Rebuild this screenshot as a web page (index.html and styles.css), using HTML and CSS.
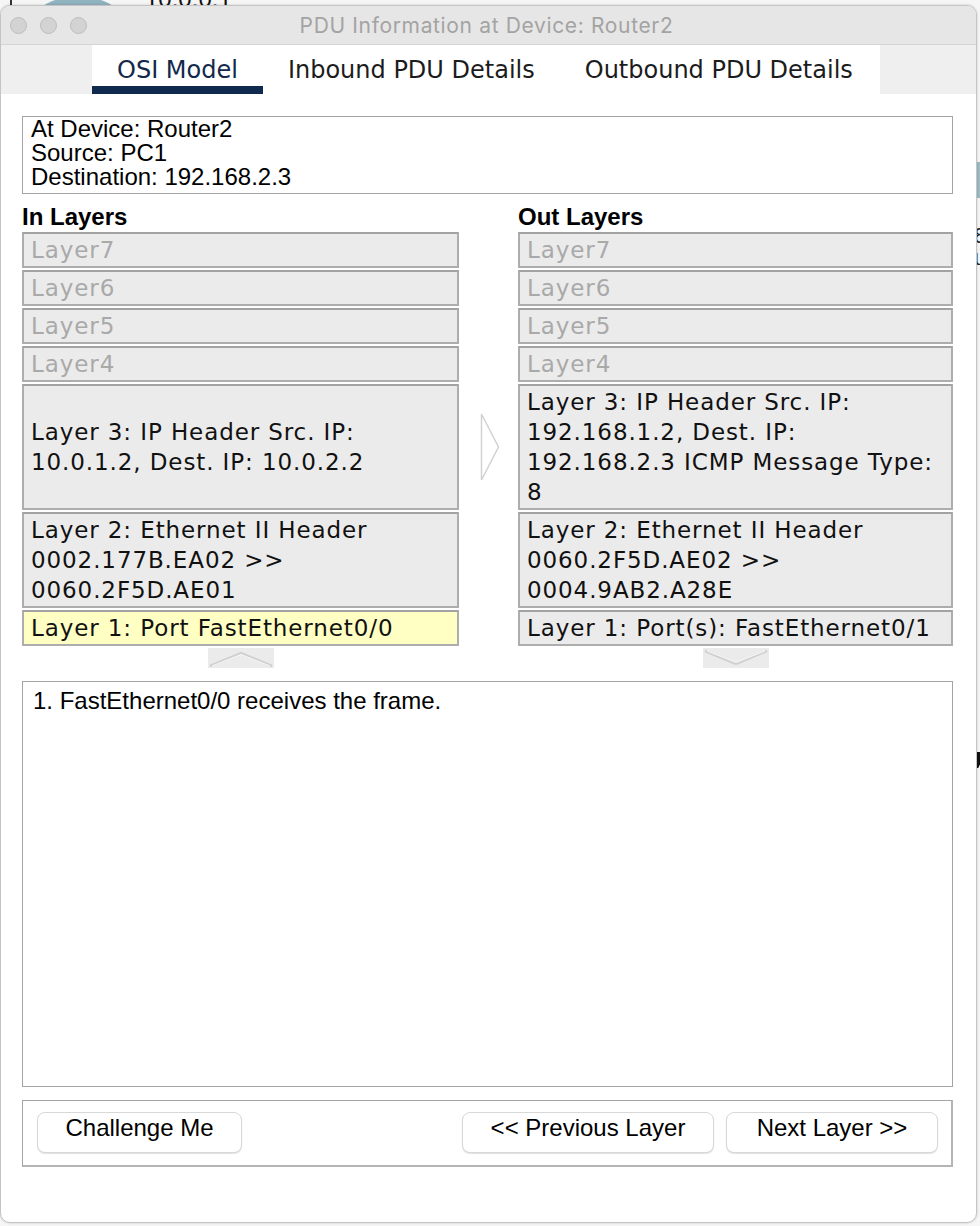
FILE: index.html
```html
<!DOCTYPE html>
<html>
<head>
<meta charset="utf-8">
<title>PDU Information at Device: Router2</title>
<link rel="stylesheet" href="styles.css">
</head>
<body>
<div class="desk">
  <span class="desk-line"></span>
  <span class="desk-router"></span>
  <span class="desk-ip">10.0.0.1</span>
  <span class="desk-switch"></span>
  <span class="desk-t8">8</span>
  <span class="desk-tu">u</span>
  <span class="desk-mark"></span>
</div>
<div class="window">
  <div class="titlebar">
    <div class="lights"><span></span><span></span><span></span></div>
    <div class="title">PDU Information at Device: Router2</div>
    <div></div>
  </div>
  <div class="tabstrip">
    <div class="tabs">
      <div class="tab active">OSI Model</div>
      <div class="tab">Inbound PDU Details</div>
      <div class="tab">Outbound PDU Details</div>
    </div>
  </div>
  <div class="content">
    <div class="info">At Device: Router2<br>Source: PC1<br>Destination: 192.168.2.3</div>
    <div class="layers">
      <div class="heading left">In Layers</div>
      <div class="heading right">Out Layers</div>

      <div class="layer off left">Layer7</div>
      <div class="layer off right">Layer7</div>
      <div class="layer off left">Layer6</div>
      <div class="layer off right">Layer6</div>
      <div class="layer off left">Layer5</div>
      <div class="layer off right">Layer5</div>
      <div class="layer off left">Layer4</div>
      <div class="layer off right">Layer4</div>

      <div class="layer left"><div>Layer 3: IP Header Src. IP:<br>10.0.1.2, Dest. IP: 10.0.2.2</div></div>
      <div class="layer right"><div>Layer 3: IP Header Src. IP:<br>192.168.1.2, Dest. IP:<br>192.168.2.3 ICMP Message Type:<br>8</div></div>

      <div class="layer left"><div>Layer 2: Ethernet II Header<br>0002.177B.EA02 &gt;&gt;<br>0060.2F5D.AE01</div></div>
      <div class="layer right"><div>Layer 2: Ethernet II Header<br>0060.2F5D.AE02 &gt;&gt;<br>0004.9AB2.A28E</div></div>

      <div class="layer hl left">Layer 1: Port FastEthernet0/0</div>
      <div class="layer right">Layer 1: Port(s): FastEthernet0/1</div>

      <div class="arrow-btn left">
        <svg width="66" height="20" viewBox="0 0 66 20"><polyline points="2,18 33,5 64,18" fill="none" stroke="#d0d0d0" stroke-width="2.5"/><polyline points="4,18 33,6.5 62,18" fill="none" stroke="#f9f9f9" stroke-width="1"/></svg>
      </div>
      <div class="arrow-btn right">
        <svg width="66" height="20" viewBox="0 0 66 20"><polyline points="2,3 33,16 64,3" fill="none" stroke="#d0d0d0" stroke-width="2.5"/><polyline points="4,3 33,14.5 62,3" fill="none" stroke="#f9f9f9" stroke-width="1"/></svg>
      </div>

      <div class="mid-arrow">
        <svg width="20" height="68" viewBox="0 0 20 68"><polygon points="1.5,1 18.5,34 1.5,67" fill="#fff" stroke="#d2d2d2" stroke-width="1.5"/></svg>
      </div>
    </div>
    <div class="desc">1. FastEthernet0/0 receives the frame.</div>
    <div class="buttons">
      <div class="btn challenge">Challenge Me</div>
      <div class="btn prev">&lt;&lt; Previous Layer</div>
      <div class="btn next">Next Layer &gt;&gt;</div>
    </div>
  </div>
</div>
</body>
</html>
```
FILE: styles.css
```css
* { box-sizing: border-box; }
html, body { margin: 0; padding: 0; }
body {
  width: 980px;
  height: 1226px;
  overflow: hidden;
  position: relative;
  background: #f6f6f6;
  font-family: "Liberation Sans", Arial, sans-serif;
  color: #000;
}

/* desktop behind the dialog */
.desk-line { position: absolute; left: 10px; top: 0; width: 2px; height: 6px; background: #333; }
.desk-router { position: absolute; left: 40px; top: -3px; width: 76px; height: 30px; border-radius: 50%; background: #8fb3bf; }
.desk-ip { position: absolute; left: 145px; top: -15px; font-size: 24px; color: #111; }
.desk-switch { position: absolute; left: 968px; top: 162px; width: 20px; height: 36px; background: #9dbcc6; }
.desk-t8 { position: absolute; left: 974px; top: 226px; font-size: 22px; line-height: 20px; color: #222; }
.desk-tu { position: absolute; left: 974px; top: 248px; font-size: 22px; line-height: 20px; color: #222; }
.desk-mark { position: absolute; left: 972px; top: 752px; width: 10px; height: 16px; background: #111; transform: skewX(-25deg); }

.window {
  position: relative;
  z-index: 1;
  margin-top: 5px;
  width: 977px;
  height: 1218px;
  background: #fff;
  border: 1px solid #c4c4c4;
  border-radius: 10px;
  overflow: hidden;
  box-shadow: 0 0 3px rgba(0, 0, 0, 0.18);
}

.titlebar {
  height: 39px;
  background: #e7e6e6;
  border-bottom: 1px solid #d4d4d4;
  display: grid;
  grid-template-columns: 1fr auto 1fr;
  align-items: center;
}
.lights { display: flex; gap: 13px; padding-left: 9px; }
.lights span {
  width: 17px; height: 17px; border-radius: 50%;
  background: #d3d3d3; border: 1px solid #bdbdbd;
}
.title {
  font-family: Inter, "Liberation Sans", sans-serif;
  font-size: 21px;
  letter-spacing: 0.65px;
  color: #a3a3a3;
  transform: translateX(-2px);
}

.tabstrip { height: 49px; background: #efefef; padding-left: 91px; display: flex; }
.tabs { display: flex; background: #fff; width: 788px; }
.tab {
  padding: 10px 25px 0;
  line-height: 31px;
  border-bottom: 8px solid transparent;
  font-family: "DejaVu Sans", Verdana, sans-serif;
  font-size: 24px;
  color: #1c1c1c;
  white-space: nowrap;
}
.tab.active { border-bottom-color: #0f2a4e; color: #13294b; }

.content { padding: 22px 23px 0 21px; }

.info {
  height: 78px;
  border: 1px solid #a4a4a4;
  padding: 0 8px;
  font-size: 24px;
  line-height: 24px;
}

.layers {
  margin-top: 11px;
  display: grid;
  grid-template-columns: 437px 59px 435px;
  row-gap: 2px;
}
.left { grid-column: 1; }
.right { grid-column: 3; }
.heading { font-weight: bold; font-size: 24px; line-height: 24px; margin-bottom: 1px; }

.layer {
  border: 2px solid #adadad;
  border-top-color: #a2a2a2;
  background: #ebebeb;
  padding: 1px 7px;
  font-family: "DejaVu Sans", Verdana, sans-serif;
  font-size: 23px;
  line-height: 30px;
  letter-spacing: 0.9px;
  white-space: nowrap;
  display: flex;
  align-items: center;
  color: #111;
}
.layer.off { color: #a9a9a9; }
.layer.hl { background: #ffffc3; }

.arrow-btn { justify-self: center; width: 66px; height: 20px; background: #ebebeb; }
.arrow-btn svg { display: block; }

.mid-arrow { grid-column: 2; grid-row: 6; align-self: center; justify-self: center; transform: translateX(1px); }
.mid-arrow svg { display: block; }

.desc {
  margin-top: 13px;
  height: 406px;
  border: 1px solid #a4a4a4;
  padding: 7px 10px;
  font-size: 24px;
  line-height: 24px;
}

.buttons {
  margin-top: 13px;
  height: 67px;
  border: 1px solid #a4a4a4;
  border-bottom: 2px solid #b4b4b4;
  border-right: 2px solid #b4b4b4;
  padding: 11px 13px 0 14px;
  display: flex;
  gap: 12px;
}
.btn {
  height: 41px;
  border: 1px solid #d8d8d8;
  border-radius: 8px;
  background: #fff;
  box-shadow: 0 1px 1px rgba(0, 0, 0, 0.12);
  font-size: 24px;
  line-height: 24px;
  padding-top: 3px;
  text-align: center;
  white-space: nowrap;
}
.btn.challenge { width: 205px; margin-right: auto; }
.btn.prev { width: 252px; }
.btn.next { width: 212px; }
```
